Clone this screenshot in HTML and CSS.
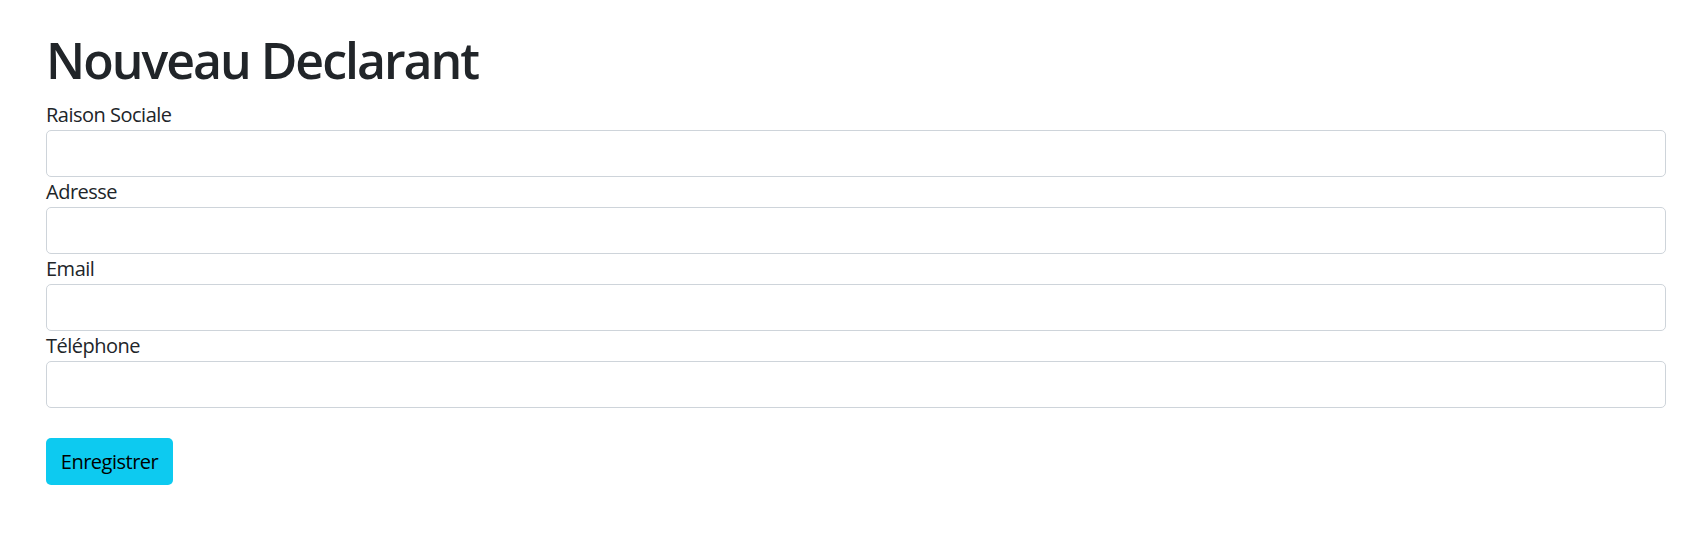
FILE: index.html
```html
<!DOCTYPE html>
<html lang="fr">
<head>
<meta charset="utf-8">
<title>Nouveau Declarant</title>
<link rel="stylesheet" href="styles.css">
</head>
<body>
<main class="page">
  <h1 class="title">Nouveau Declarant</h1>
  <form class="form">
    <div class="field">
      <label class="label" for="raison">Raison Sociale</label>
      <input class="control" id="raison" type="text">
    </div>
    <div class="field">
      <label class="label" for="adresse">Adresse</label>
      <input class="control" id="adresse" type="text">
    </div>
    <div class="field">
      <label class="label" for="email">Email</label>
      <input class="control" id="email" type="text">
    </div>
    <div class="field">
      <label class="label" for="tel">Téléphone</label>
      <input class="control" id="tel" type="text">
    </div>
    <button class="btn" type="button">Enregistrer</button>
  </form>
</main>
</body>
</html>
```

FILE: styles.css
```css
html, body {
  margin: 0;
  padding: 0;
  background: #fff;
}
body {
  font-family: "Open Sans", "Noto Sans", sans-serif;
  color: #212529;
}
.page {
  padding: 30px 25px 0 46px;
}
.title {
  margin: 0 0 10px;
  font-size: 50px;
  font-weight: 600;
  letter-spacing: -2px;
  line-height: 60px;
  color: #212529;
}
.form {
  display: flex;
  flex-direction: column;
}
.field {
  display: flex;
  flex-direction: column;
}
.label {
  font-size: 20px;
  line-height: 30px;
  letter-spacing: -0.5px;
}
.control {
  box-sizing: border-box;
  width: 100%;
  height: 47px;
  margin: 0;
  padding: 7px 15px;
  border: 1px solid #ced4da;
  border-radius: 5px;
  font: inherit;
  font-size: 20px;
  background: #fff;
}
.btn {
  align-self: flex-start;
  margin-top: 30px;
  height: 47px;
  width: 127px;
  padding: 0;
  border: none;
  border-radius: 5px;
  background: #0dcaf0;
  color: #000;
  font-family: inherit;
  font-size: 20px;
  line-height: 30px;
  letter-spacing: -0.5px;
}
```
